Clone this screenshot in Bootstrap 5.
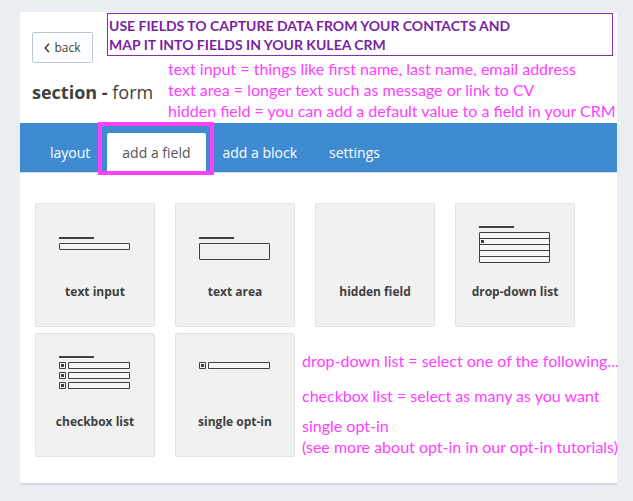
<!DOCTYPE html>
<html lang="en">
<head>
<meta charset="utf-8">
<meta name="viewport" content="width=device-width, initial-scale=1">
<title>section - form</title>
<link href="https://cdn.jsdelivr.net/npm/bootstrap@5.3.0/dist/css/bootstrap.min.css" rel="stylesheet">
<style>
  body { background: #eaeef3; color: #404040; font-family: "Open Sans", sans-serif; padding: 12px 16px 16px 20px; }
  .panel { background: #fff; border-radius: 2px; border-bottom: 2px solid #d3d6dc; }
  .panel-head { display: grid; grid-template-columns: 75px 61px minmax(0, 1fr); grid-template-rows: auto auto; padding: 1px 4px 2px 12px; }
  .back-btn { grid-area: 1 / 1 / 3 / 2; width: 61px; height: 31px; margin-top: 19px; padding: 0; font-size: 12px; color: #404040; border: 1px solid #b9c9d9; border-radius: 2px; background: #fff; }
  .headline { grid-area: 1 / 2 / 2 / 4; border: 1px solid #8a2ba8; padding: 2px 1px 1px; font: bold 14px/19px Lato, sans-serif; color: #7b1fa2; }
  .section-title { grid-area: 2 / 1 / 3 / 3; font-size: 18px; line-height: 24px; margin-top: 24px; }
  .hint { font: 16px/21px Lato, sans-serif; color: #ff40ff; white-space: nowrap; }
  .head-hints { grid-area: 2 / 3 / 3 / 4; padding-top: 2px; }
  .tab-bar { background: #3e8bd1; border-bottom: 1px solid #d5dae3; padding: 10px 15px 0; gap: 2px; }
  .tab-bar .nav-link { color: #fff; font-size: 14px; line-height: 20px; padding: 10px 15px 9px; border-radius: 2px 2px 0 0; }
  .tab-bar .nav-link.active { background: #fff; color: #555; }
  .highlight { position: absolute; inset: -11px -8px -3px -9px; border: 4px solid #ff40ff; pointer-events: none; }
  .fields { padding: 30px 0 26px 15px; }
  .field-row { gap: 20px; }
  .field-row + .field-row { margin-top: 6px; }
  .field-card { width: 120px; height: 124px; flex: none; padding: 20px 0 0; background: #f1f1f1; border: 1px solid #e2e2e2; border-radius: 2px; color: #404040; font-size: 12px; font-weight: 700; line-height: 18px; }
  .field-card svg { display: block; width: 72px; height: 40px; margin: 0 0 19px; fill: none; stroke: #404040; }
  .field-card .solid { fill: #404040; stroke: none; }
  .field-card .pale { fill: #f6f6f6; }
  .low-hints { margin-left: -13px; padding-top: 17px; }
  .low-hints p { margin-bottom: 9px; }
  .low-hints p:first-child { margin-bottom: 14px; }
</style>
</head>
<body>
<main class="panel">
  <header class="panel-head">
    <button type="button" class="btn back-btn d-flex align-items-center justify-content-center">
      <svg width="6" height="10" viewBox="0 0 6 10" class="me-1" fill="none" stroke="#404040" stroke-width="1.5" aria-hidden="true"><path d="M5 .8 1.200 5 5 9.200"/></svg>back
    </button>
    <p class="headline mb-0">USE FIELDS TO CAPTURE DATA FROM YOUR CONTACTS AND<br>MAP IT INTO FIELDS IN YOUR KULEA CRM</p>
    <h1 class="section-title mb-0 fw-normal"><strong>section -</strong> form</h1>
    <div class="hint head-hints">
      <div>text input = things like first name, last name, email address</div>
      <div>text area = longer text such as message or link to CV</div>
      <div>hidden field = you can add a default value to a field in your CRM</div>
    </div>
  </header>

  <nav class="nav tab-bar">
    <a class="nav-link" href="#layout">layout</a>
    <a class="nav-link active position-relative" href="#field" aria-current="page">add a field<span class="highlight"></span></a>
    <a class="nav-link" href="#block">add a block</a>
    <a class="nav-link" href="#settings">settings</a>
  </nav>

  <section class="fields">
    <div class="field-row d-flex align-items-start">
      <button type="button" class="field-card d-flex flex-column align-items-center">
        <svg viewBox="0 0 72 40" aria-hidden="true"><path class="solid" d="M0 13h35v2H0z"/><rect class="pale" x=".5" y="19.500" width="70" height="6" rx=".5"/></svg>
        text input
      </button>
      <button type="button" class="field-card d-flex flex-column align-items-center">
        <svg viewBox="0 0 72 40" aria-hidden="true"><path class="solid" d="M0 13h35v2H0z"/><rect x=".5" y="19.500" width="70" height="16" rx=".5"/></svg>
        text area
      </button>
      <button type="button" class="field-card d-flex flex-column align-items-center">
        <svg viewBox="0 0 72 40" aria-hidden="true"></svg>
        hidden field
      </button>
      <button type="button" class="field-card d-flex flex-column align-items-center">
        <svg viewBox="0 0 72 40" aria-hidden="true"><path class="solid" d="M0 2h35v2H0z"/><rect class="pale" x=".5" y="8.500" width="70" height="30" rx=".5"/><path d="M1 14.500h69M1 20.500h69M1 26.500h69M1 32.500h69"/><path class="solid" d="M2 16h3v3H2z"/></svg>
        drop-down list
      </button>
    </div>
    <div class="field-row d-flex align-items-start">
      <button type="button" class="field-card d-flex flex-column align-items-center">
        <svg viewBox="0 0 72 40" aria-hidden="true"><path class="solid" d="M0 2h35v2H0z"/><g class="pale"><path d="M.5 8.500h6v6h-6zM.5 18.500h6v6h-6zM.5 28.500h6v6h-6zM9.500 8.500h61v6h-61zM9.500 18.500h61v6h-61zM9.500 28.500h61v6h-61z"/></g><path class="solid" d="M2 10h3v3H2zM2 20h3v3H2zM2 30h3v3H2z"/></svg>
        checkbox list
      </button>
      <button type="button" class="field-card d-flex flex-column align-items-center">
        <svg viewBox="0 0 72 40" aria-hidden="true"><g class="pale"><path d="M.5 8.500h6v6h-6zM9.500 8.500h61v6h-61z"/></g><path class="solid" d="M2 10h3v3H2z"/></svg>
        single opt-in
      </button>
      <div class="hint low-hints">
        <p>drop-down list = select one of the following...</p>
        <p>checkbox list = select as many as you want</p>
        <p class="mb-0">single opt-in<br>(see more about opt-in in our opt-in tutorials)</p>
      </div>
    </div>
  </section>
</main>
<script src="https://cdn.jsdelivr.net/npm/bootstrap@5.3.0/dist/js/bootstrap.bundle.min.js"></script>
</body>
</html>
